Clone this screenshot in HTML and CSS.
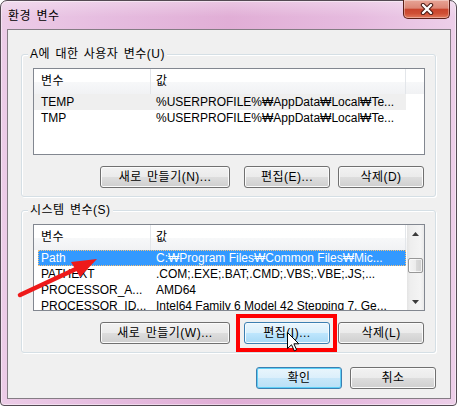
FILE: index.html
```html
<!DOCTYPE html>
<html lang="ko">
<head>
<meta charset="utf-8">
<title>환경 변수</title>
<link rel="stylesheet" href="styles.css">
</head>
<body>
<div class="stage">
  <div class="window">
    <div class="titlebar"><span class="title">환경 변수</span></div>
    <div class="client">
      <section class="group group-user">
        <div class="group-title">A에 대한 사용자 변수(U)</div>
        <div class="list">
          <div class="lv-main">
            <div class="header">
              <div class="hcol h1">변수</div>
              <div class="hcol h2">값</div>
              <div class="hcol h3"></div>
            </div>
            <div class="row inactive"><div class="c1">TEMP</div><div class="c2">%USERPROFILE%₩AppData₩Local₩Te...</div></div>
            <div class="row"><div class="c1">TMP</div><div class="c2">%USERPROFILE%₩AppData₩Local₩Te...</div></div>
          </div>
        </div>
        <div class="btn-row">
          <button class="btn btn-new">새로 만들기(N)...</button>
          <button class="btn btn-edit">편집(E)...</button>
          <button class="btn btn-del">삭제(D)</button>
        </div>
      </section>
      <section class="group group-sys">
        <div class="group-title">시스템 변수(S)</div>
        <div class="list">
          <div class="lv-main">
            <div class="header">
              <div class="hcol h1">변수</div>
              <div class="hcol h2">값</div>
              <div class="hcol h3"></div>
            </div>
            <div class="row sel"><div class="c1">Path</div><div class="c2">C:₩Program Files₩Common Files₩Mic...</div></div>
            <div class="row"><div class="c1">PATHEXT</div><div class="c2">.COM;.EXE;.BAT;.CMD;.VBS;.VBE;.JS;...</div></div>
            <div class="row"><div class="c1">PROCESSOR_A...</div><div class="c2">AMD64</div></div>
            <div class="row"><div class="c1">PROCESSOR_ID...</div><div class="c2">Intel64 Family 6 Model 42 Stepping 7, Ge...</div></div>
          </div>
          <div class="vscroll">
            <div class="sb-btn"><svg width="7" height="4" viewBox="0 0 7 4"><polygon points="0,4 3.5,0 7,4" fill="#3a3a3a"/></svg></div>
            <div class="sb-thumb"></div>
            <div class="sb-space"></div>
            <div class="sb-btn"><svg width="7" height="4" viewBox="0 0 7 4"><polygon points="0,0 7,0 3.5,4" fill="#3a3a3a"/></svg></div>
          </div>
        </div>
        <div class="btn-row">
          <button class="btn btn-new">새로 만들기(W)...</button>
          <button class="btn btn-edit btn-hot">편집(I)...</button>
          <button class="btn btn-del">삭제(L)</button>
        </div>
      </section>
      <div class="dlg-buttons">
        <button class="btn btn-dlg btn-default">확인</button>
        <button class="btn btn-dlg">취소</button>
      </div>
    </div>
  </div>
  <button class="close" aria-label="닫기">
    <svg width="14" height="12" viewBox="0 0 14 12">
      <path d="M3 2 L11 10 M11 2 L3 10" stroke="#4a1a14" stroke-width="4.4" stroke-linecap="round"/>
      <path d="M3 2 L11 10 M11 2 L3 10" stroke="#ffffff" stroke-width="2.4" stroke-linecap="round"/>
    </svg>
  </button>
  <div class="mark-box"></div>
  <svg class="mark-arrow" width="457" height="406" viewBox="0 0 457 406">
    <line x1="20" y1="295" x2="78" y2="268" stroke="#ee1a1a" stroke-width="4.5" stroke-linecap="round"/>
    <polygon points="97,259 71,262 80,277" fill="#ee1a1a"/>
  </svg>
  <svg class="cursor" width="13" height="20" viewBox="0 0 13 20">
    <path d="M0.5 0.5 L0.5 16.5 L4.5 12.8 L7.3 18.8 L9.6 17.8 L6.9 11.8 L11.8 11.8 Z" fill="#ffffff" stroke="#000000" stroke-width="1" stroke-linejoin="round"/>
  </svg>
</div>
</body>
</html>
```
FILE: styles.css
```css
* { box-sizing: border-box; }
html, body { margin: 0; padding: 0; }
body {
  width: 457px;
  height: 406px;
  overflow: hidden;
  background: #ffffff;
  font-family: "Liberation Sans", "Noto Sans CJK KR", sans-serif;
  font-size: 12px;
  color: #000;
}
.stage { position: relative; width: 457px; height: 406px; }

.window {
  width: 457px;
  height: 406px;
  border: 1px solid #544a53;
  border-radius: 7px 7px 4px 4px;
  padding: 0 5px 6px 6px;
  background:
    linear-gradient(180deg, rgba(255,255,255,0.30) 0px, rgba(255,255,255,0) 16px),
    linear-gradient(90deg, #ecccE7 0%, #e6bde0 22%, #e1aed6 50%, #e6bbdf 78%, #edcfe9 100%);
  box-shadow: inset 0 0 0 1px rgba(255,255,255,0.45);
  display: flex;
  flex-direction: column;
}
.titlebar {
  height: 28px;
  display: flex;
  align-items: center;
  padding-left: 1px;
}
.title {
  font-family: "Noto Sans CJK KR", sans-serif;
  font-size: 12px;
  line-height: 16px;
  letter-spacing: 0.5px;
  word-spacing: 1.5px;
  color: #000;
}

.client {
  height: 370px;
  border: 1px solid #847c84;
  background: #f0f0f0;
  padding: 0 14px 0 13px;
}

.group {
  border: 1px solid #d5dfe5;
  border-radius: 3px;
  padding: 0 10px 8px 11px;
  box-shadow: inset 1px 1px 0 #ffffff, 1px 1px 0 #ffffff;
}
.group-user { margin-top: 24px; }
.group-sys { margin-top: 13px; }
.group-title {
  width: max-content;
  height: 16px;
  line-height: 16px;
  margin: -9px 0 0 -5px;
  padding: 0 2px;
  background: #f0f0f0;
  letter-spacing: 0.5px;
  word-spacing: 1.5px;
}

.list {
  height: 87px;
  margin-top: 6px;
  border: 1px solid #828790;
  background: #ffffff;
  display: flex;
  overflow: hidden;
}
.lv-main { flex: 1; overflow: hidden; }
.header {
  display: flex;
  height: 25px;
  background: linear-gradient(180deg, #ffffff 0%, #ffffff 52%, #f7f8f9 53%, #f1f2f4 100%);
}
.hcol {
  height: 25px;
  line-height: 24px;
  border-right: 1px solid #e3e6ea;
  white-space: nowrap;
  letter-spacing: 0.5px;
}
.h1 { width: 117px; padding-left: 7px; }
.h2 { width: 255px; padding-left: 5px; }
.h3 { flex: 1; border-right: none; }

.row {
  display: flex;
  width: 372px;
  height: 16px;
  line-height: 16px;
  white-space: nowrap;
}
.c1 { width: 117px; padding-left: 7px; overflow: hidden; }
.c2 { width: 255px; padding-left: 5px; overflow: hidden; }
.row.inactive { background: #efefef; }
.row.sel {
  margin-left: 4px;
  width: 368px;
  background: #3399ff;
  color: #ffffff;
  outline: 1px dotted #f7c27a;
  outline-offset: -1px;
}
.row.sel .c1 { width: 113px; padding-left: 3px; }

.vscroll {
  width: 17px;
  height: 85px;
  display: flex;
  flex-direction: column;
  background: linear-gradient(90deg, #e4e4e4 0%, #eeeeee 20%, #f4f4f4 80%, #e9e9e9 100%);
}
.sb-btn {
  height: 17px;
  display: flex;
  align-items: center;
  justify-content: center;
}
.sb-thumb {
  height: 15px;
  margin: 16px 1px 0 1px;
  border: 1px solid #979797;
  border-radius: 2px;
  background: linear-gradient(90deg, #f4f4f4 0%, #ececec 50%, #dcdcdc 51%, #cfcfcf 100%);
  box-shadow: inset 0 0 0 1px rgba(255,255,255,0.7);
}
.sb-space { flex: 1; }

.btn-row {
  display: flex;
  justify-content: flex-end;
  margin-top: 11px;
  padding-right: 1px;
}
.btn {
  height: 22px;
  padding: 0;
  border: 1px solid #707070;
  border-radius: 3px;
  background: linear-gradient(180deg, #f2f2f2 0%, #ebebeb 50%, #dddddd 51%, #cfcfcf 100%);
  box-shadow: inset 0 0 0 1px #fbfbfb;
  font-family: "Liberation Sans", "Noto Sans CJK KR", sans-serif;
  font-size: 12px;
  line-height: 19px;
  letter-spacing: 0.5px;
  word-spacing: 1.5px;
  color: #000;
  text-align: center;
  white-space: nowrap;
}
.btn-new { width: 130px; }
.btn-edit { width: 86px; margin-left: 14px; }
.btn-del { width: 86px; margin-left: 8px; }
.btn-hot {
  border-color: #3c7fb1;
  background: linear-gradient(180deg, #eaf6fd 0%, #d9f0fc 50%, #bee6fd 51%, #a7d9f5 100%);
  box-shadow: inset 0 0 0 1px #f4fbff;
}

.dlg-buttons {
  display: flex;
  justify-content: flex-end;
  margin-top: 14px;
}
.btn-dlg { width: 86px; margin-left: 8px; }
.btn-default {
  border-color: #3c7fb1;
  background: linear-gradient(180deg, #e9f5fc 0%, #dbeffb 50%, #c8e7f9 51%, #b9e0f6 100%);
  box-shadow: inset 0 0 0 1px #5fd0f7;
}

.close {
  position: absolute;
  left: 403px;
  top: 0;
  width: 47px;
  height: 19px;
  padding: 0;
  border: 1px solid #5b1f18;
  border-top: none;
  border-radius: 0 0 5px 5px;
  background: linear-gradient(180deg, #e7a496 0%, #dc8675 45%, #c9442d 52%, #cf4f35 75%, #e27a5e 100%);
  box-shadow: inset 0 0 0 1px rgba(255,255,255,0.35);
  display: flex;
  align-items: center;
  justify-content: center;
}

.mark-box {
  position: absolute;
  left: 236px;
  top: 314px;
  width: 101px;
  height: 38px;
  border: 4px solid #ff0000;
}
.mark-arrow {
  position: absolute;
  left: 0;
  top: 0;
  pointer-events: none;
}
.cursor {
  position: absolute;
  left: 287px;
  top: 332px;
}
```
